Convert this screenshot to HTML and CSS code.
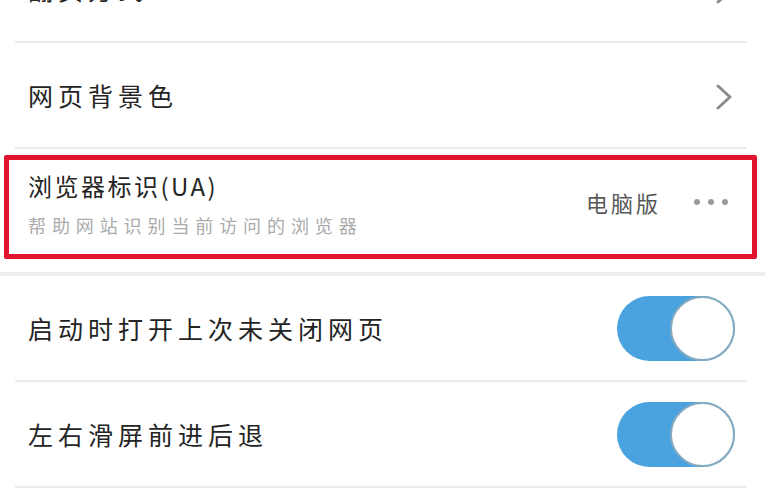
FILE: index.html
```html
<!DOCTYPE html>
<html lang="zh-CN">
<head>
    <meta charset="UTF-8" />
    <meta name="viewport" content="width=device-width, initial-scale=1.0"/>
    <title>浏览设置</title>
    <link rel="stylesheet" href="styles.css">
</head>
<body>

    <div class="settings">
        <div class="row">
            <span class="label">翻页方式</span>
            <svg class="chevron" width="18" height="26" viewBox="0 0 18 26"><polyline points="3,2 15,13 3,24" /></svg>
        </div>

        <div class="row">
            <span class="label">网页背景色</span>
            <svg class="chevron" width="18" height="26" viewBox="0 0 18 26"><polyline points="3,2 15,13 3,24" /></svg>
        </div>

        <!-- 标注框 -->
        <div class="mark-area">
            <div class="mark">
                <div class="ua-text">
                    <div class="ua-title">浏览器标识(UA)</div>
                    <div class="ua-desc">帮助网站识别当前访问的浏览器</div>
                </div>
                <div class="ua-side">
                    <span class="ua-value">电脑版</span>
                    <span class="dots"><i></i><i></i><i></i></span>
                </div>
            </div>
        </div>

        <div class="group-gap"></div>

        <div class="row">
            <span class="label">启动时打开上次未关闭网页</span>
            <span class="switch on"><span class="knob"></span></span>
        </div>

        <div class="row">
            <span class="label">左右滑屏前进后退</span>
            <span class="switch on"><span class="knob"></span></span>
        </div>
    </div>

</body>
</html>
```

FILE: styles.css
```css
body {
    margin: 0;
    background-color: #fff;
    color: #242424;
    font-family: "Noto Sans CJK SC", "Noto Sans", sans-serif;
    overflow: hidden;
}

.settings {
    margin-top: -63px; /* list scrolled up */
}

.row {
    display: flex;
    align-items: center;
    justify-content: space-between;
    height: 104px;
    margin: 0 18px 0 15px;
    padding: 0 12px 0 13px;
    border-bottom: 2px solid #ebebeb;
}

.label {
    font-size: 25px;
    letter-spacing: 5px;
}

.chevron {
    margin-right: 2px;
    margin-top: 4px;
}

.chevron polyline {
    fill: none;
    stroke: #8c8c8c;
    stroke-width: 3;
    stroke-linecap: round;
    stroke-linejoin: round;
}

.mark-area {
    padding: 6px 8px 13px 4px;
}

.mark {
    display: flex;
    justify-content: space-between;
    height: 94px;
    border: 5px solid #e1132f;
    border-radius: 2px;
    padding: 0 24px 0 19px;
}

.ua-title {
    margin-top: 10px;
    font-size: 24px;
    line-height: 32px;
    letter-spacing: 2.5px;
}

.ua-desc {
    margin-top: 11px;
    font-size: 18px;
    line-height: 24px;
    letter-spacing: 5.9px;
    color: #ababab;
}

.ua-side {
    display: flex;
    align-items: center;
    padding-bottom: 10px;
}

.ua-value {
    font-size: 22px;
    letter-spacing: 3px;
    color: #585858;
}

.dots {
    display: flex;
    gap: 8px;
    margin-left: 33px;
}

.dots i {
    width: 6px;
    height: 6px;
    border-radius: 50%;
    background-color: #9a9a9a;
}

.group-gap {
    height: 4px;
    background-color: #eeeeee;
}

.switch {
    display: flex;
    justify-content: flex-end;
    width: 118px;
    height: 65px;
    border-radius: 33px;
    background-color: #cfcfcf;
}

.switch.on {
    background-color: #4aa3df;
}

.knob {
    box-sizing: border-box;
    width: 65px;
    height: 65px;
    border-radius: 50%;
    background-color: #fff;
    border: 2px solid #86aac0;
}
```
